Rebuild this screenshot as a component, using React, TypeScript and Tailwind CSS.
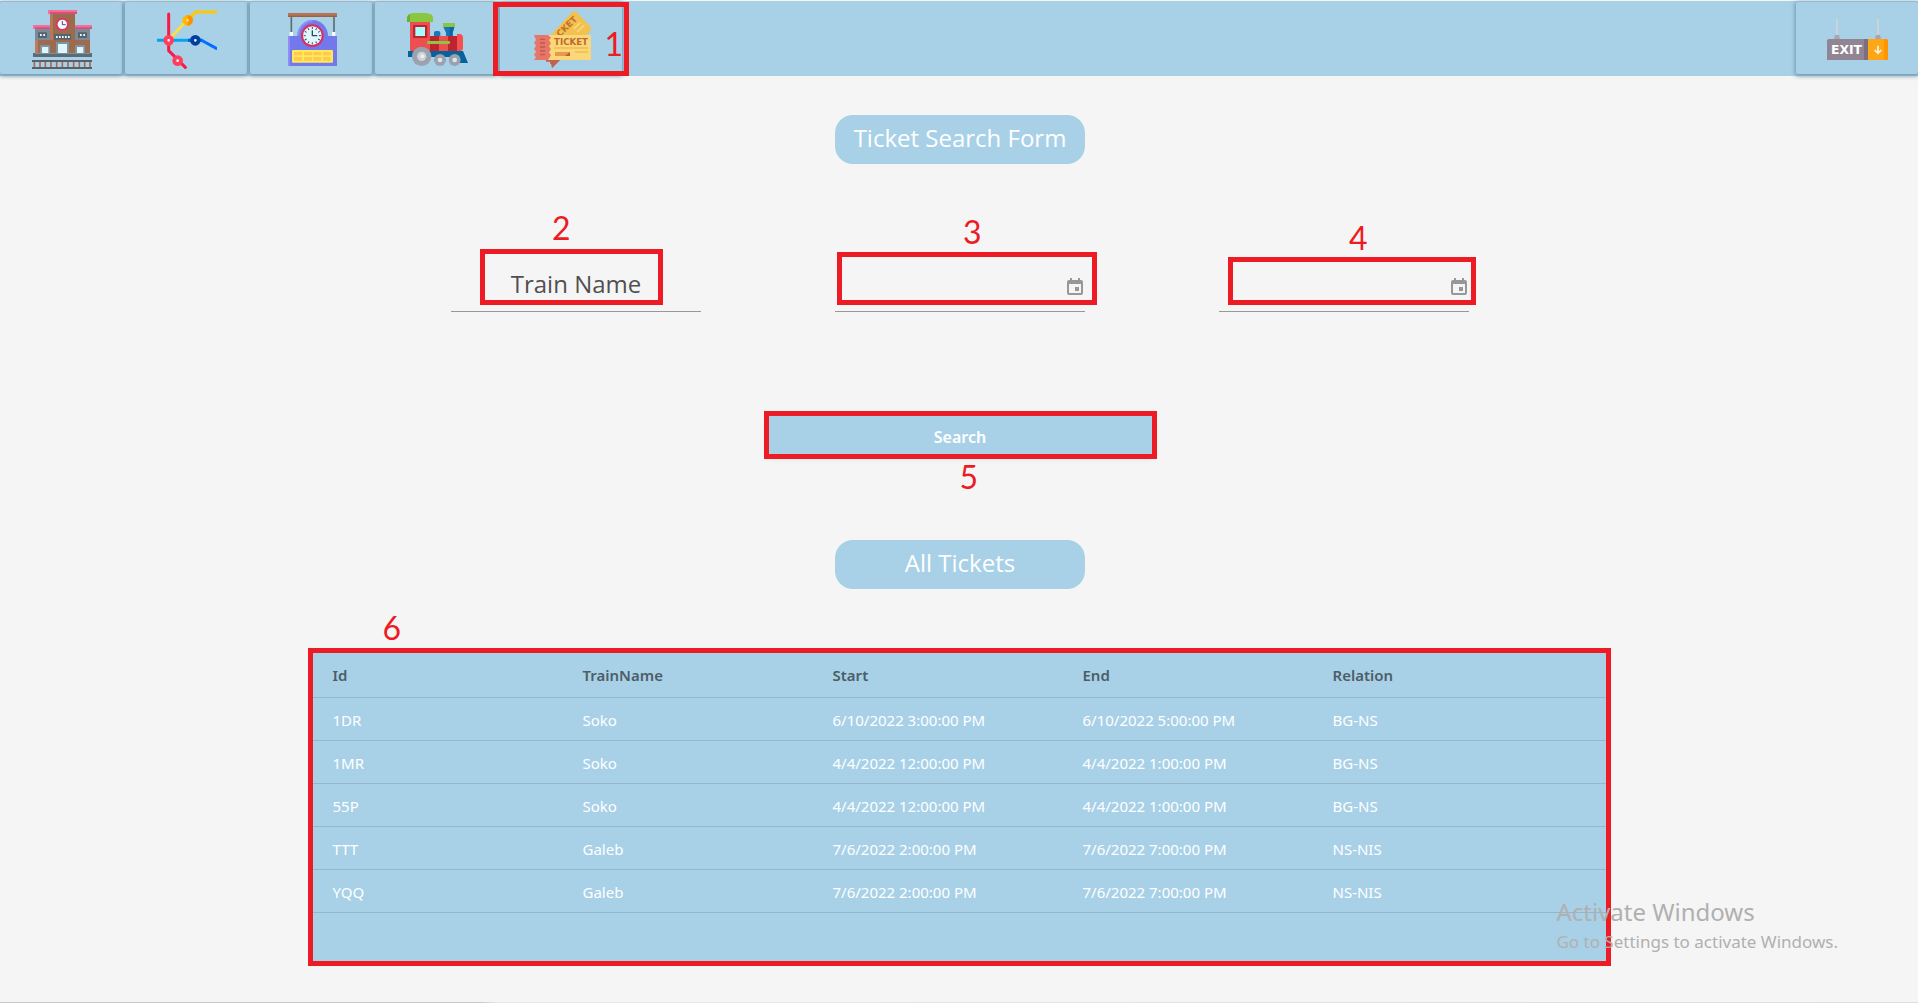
import React from "react";

function StationIcon() {
  return (
    <svg viewBox="90 18 186 186" className="size-[62px]" aria-hidden="true">
      <rect x="105" y="82" width="165" height="36" fill="#7b8a96" />
      <rect x="105" y="117" width="165" height="40" fill="#9c6b52" />
      <rect x="105" y="117" width="9" height="40" fill="#c07a5a" />
      <rect x="150" y="36" width="75" height="121" fill="#9c6b4c" />
      <rect x="150" y="36" width="9" height="82" fill="#b9775a" />
      <rect x="144" y="27" width="87" height="12" fill="#f0719b" />
      <rect x="150" y="33" width="81" height="6" fill="#d94f7c" />
      <path d="M99 72h51v12H99zM225 72h51v12h-51z" fill="#f0719b" />
      <path d="M105 79h45v5h-45zM225 79h51v5h-51z" fill="#d94f7c" />
      <circle cx="187" cy="70" r="20" fill="#d9386b" />
      <circle cx="187" cy="70" r="14" fill="#eefcff" />
      <path d="M187 60v11h10" stroke="#46545e" strokeWidth="3" fill="none" />
      <path d="M162 99h51v17h-51zM114 94h27v17h-27zM234 94h27v17h-27z" fill="#56646f" />
      <path d="M168 105h5v6h-5zM177 105h5v6h-5zM186 105h5v6h-5zM195 105h5v6h-5zM204 105h5v6h-5zM120 99h5v6h-5zM130 99h5v6h-5zM240 99h5v6h-5zM250 99h5v6h-5z" fill="#eefcff" />
      <path d="M168 123h39v34h-39zM120 132h30v25h-30zM225 132h30v25h-30z" fill="#8093a0" />
      <path d="M174 129h27v28h-27zM126 138h19v19h-19zM231 138h19v19h-19z" fill="#dcf7ff" />
      <rect x="99" y="156" width="177" height="12" fill="#5a6c78" />
      <rect x="105" y="156" width="165" height="3" fill="#7c8f9b" />
      <path d="M103 177v30M120 177v30M136 177v30M153 177v30M170 177v30M187 177v30M204 177v30M221 177v30M238 177v30M254 177v30M270 177v30" stroke="#a9694c" strokeWidth="5" />
      <path d="M96 180h183M96 201h183" stroke="#56616b" strokeWidth="6" />
    </svg>
  );
}

function RouteIcon() {
  return (
    <svg viewBox="465 18 186 186" className="size-[62px]" aria-hidden="true">
      <g fill="none" strokeWidth="9">
        <path d="M471 118h100" stroke="#00a5ef" />
        <path d="M564 118h44" stroke="#0563d8" />
        <path d="M603 117l46 25" stroke="#0070ff" strokeLinecap="round" />
        <path d="M506 117l48-52" stroke="#ffdd40" />
        <path d="M567 53l20-20h61" stroke="#ffc800" strokeLinecap="round" />
        <path d="M506 39v110l50 50" stroke="#fb1845" strokeLinecap="round" />
      </g>
      <circle cx="506" cy="118" r="10" fill="#fff" stroke="#ff3e5c" strokeWidth="12" />
      <circle cx="533" cy="179" r="10" fill="#fff" stroke="#ff3e5c" strokeWidth="12" />
      <circle cx="563" cy="58" r="10" fill="#ffe2a0" stroke="#ffb900" strokeWidth="12" />
      <path d="M563 48a10 10 0 010 20" fill="none" stroke="#ff9000" strokeWidth="12" />
      <circle cx="586" cy="118" r="10" fill="#fff" stroke="#003f9e" strokeWidth="12" />
    </svg>
  );
}

function ScheduleIcon() {
  const ticks = [0, 30, 60, 90, 120, 150, 180, 210, 240, 270, 300, 330];
  return (
    <svg viewBox="120 18 186 186" className="size-[62px]" aria-hidden="true">
      <path d="M154 46v48M282 46v48" stroke="#5c6e7b" strokeWidth="5" />
      <rect x="144" y="36" width="147" height="12" fill="#b87355" />
      <rect x="144" y="44" width="147" height="4" fill="#97614a" />
      <rect x="149" y="93" width="10" height="13" fill="#f2fbff" />
      <rect x="276" y="93" width="10" height="13" fill="#f2fbff" />
      <path d="M144 105h28a46 48 0 0192 0h27v90H144z" fill="#7379ea" />
      <path d="M144 105h6v90h-6zM172 105a46 48 0 0146-48v6a40 42 0 00-40 42z" fill="#8f8df5" />
      <circle cx="217" cy="104" r="34" fill="#dc2d5d" />
      <circle cx="217" cy="104" r="28" fill="#dff8ff" />
      {ticks.map((angle) => (
        <path key={angle} d="M217 78v6" stroke="#394954" strokeWidth="3" transform={`rotate(${angle} 217 104)`} />
      ))}
      <path d="M217 88v16h15" stroke="#394954" strokeWidth="4" fill="none" />
      <rect x="156" y="147" width="123" height="38" rx="3" fill="#ffe85a" />
      <path d="M162 153h24v10h-24zM192 153h24v10h-24zM220 153h24v10h-24zM249 153h23v10h-23zM162 168h24v11h-24zM192 168h24v11h-24zM220 168h24v11h-24zM249 168h23v11h-23z" fill="#ffc94f" />
    </svg>
  );
}

function TrainIcon() {
  return (
    <svg viewBox="495 18 186 186" className="size-[62px] overflow-visible" aria-hidden="true">
      <path d="M504 150h165l15 36h-27l-10-18H504z" fill="#04629c" />
      <rect x="510" y="60" width="60" height="90" fill="#ed4f50" />
      <path d="M570 105h84v45h-84z" fill="#bd2430" />
      <path d="M597 105h27v45h-27z" fill="#ed4f50" />
      <path d="M651 99h9q9 2 9 12v30q0 9-9 9h-9z" fill="#f4504f" />
      <path d="M501 63V49q2-13 24-13h30q23 1 24 13v14z" fill="#8ac640" />
      <path d="M501 63V49q2-8 9-10v24z" fill="#6daf35" />
      <rect x="519" y="72" width="43" height="39" rx="3" fill="#bd2430" />
      <rect x="526" y="78" width="29" height="27" fill="#a6fbff" />
      <path d="M582 105V95q0-5 6-5h7q6 0 6 5v10z" fill="#1976b8" />
      <path d="M610 78h33l-5 17v10h-20V95z" fill="#1976b8" />
      <path d="M628 78h15l-5 17v10h-10z" fill="#0b67a8" />
      <rect x="609" y="66" width="36" height="12" fill="#8ac640" />
      <rect x="561" y="120" width="69" height="9" rx="3" fill="#8ac640" />
      <circle cx="545" cy="166" r="29" fill="#9aa2ad" />
      <circle cx="545" cy="166" r="14" fill="#cdd1d8" />
      <circle cx="547" cy="166" r="6" fill="#eceef2" />
      <circle cx="600" cy="177" r="18" fill="#9aa2ad" />
      <circle cx="600" cy="177" r="7" fill="#e2e4ea" />
      <circle cx="644" cy="177" r="18" fill="#9aa2ad" />
      <circle cx="644" cy="177" r="7" fill="#e2e4ea" />
    </svg>
  );
}

function TicketIcon() {
  return (
    <svg viewBox="150 18 186 186" className="size-[62px]" aria-hidden="true">
      <path d="M198 174h42v4l-24 24-3-14h-3v-6h-12z" fill="#c4604f" />
      <path d="M213 101l66-70 8-1 46 49v8l-14 15z" fill="#f2c14e" />
      <text x="240" y="109" transform="rotate(-45 240 109)" fontFamily="DejaVu Sans, sans-serif" fontWeight="700" fontSize="26" fill="#c3702c">CKET</text>
      <path d="M281 83l20-18M291 93l22-20" stroke="#f9dc8c" strokeWidth="4" />
      <path d="M204 102h129v75H204z" fill="#fbd779" />
      <path d="M162 102h42l9 8-6 8 6 9-6 9 6 9-6 9 6 9-9 14h-42l6-8-6-8 6-9-6-9 6-9-6-9 6-8z" fill="#e67667" />
      <path d="M180 115h15M180 126h15M180 138h15M180 150h15M180 161h15" stroke="#c3574f" strokeWidth="4" />
      <text x="222" y="131" fontFamily="DejaVu Sans, sans-serif" fontWeight="700" fontSize="26" fill="#bd6a2b">TICKET</text>
      <path d="M222 141h102M285 153h39" stroke="#f0bd49" strokeWidth="5" />
      <rect x="225" y="153" width="45" height="12" fill="#e59a50" />
      <path d="M255 165l15-12v12z" fill="#b9622c" />
    </svg>
  );
}

function ExitIcon() {
  return (
    <svg viewBox="168 18 186 186" className="size-[62px]" aria-hidden="true">
      <path d="M201 54v50M324 54v50" stroke="#c8d4da" strokeWidth="6" />
      <path d="M192 114l3-12h12l3 12zM315 114l3-12h12l3 12z" fill="#aaa3b0" />
      <path d="M175 114h119v63H171v-59z" fill="#918594" />
      <rect x="282" y="114" width="12" height="63" fill="#7c6f80" />
      <path d="M294 114h56l4 4v59h-60z" fill="#ffa617" />
      <path d="M342 114h8l4 4v59h-12z" fill="#ff9500" />
      <text x="183" y="160" fontFamily="DejaVu Sans, sans-serif" fontWeight="700" fontSize="37" fill="#fff">EXIT</text>
      <path d="M324 134v22M314 147l10 10 10-10" stroke="#fff6e4" strokeWidth="5" fill="none" />
    </svg>
  );
}

function CalendarIcon() {
  return (
    <svg viewBox="0 0 16 17" className="h-[17px] w-4" aria-hidden="true">
      <path d="M3 0h2v2h6V0h2v2h1q2 0 2 2v11q0 2-2 2H2q-2 0-2-2V4q0-2 2-2h1zM2 6v9h12V6z" fill="#979797" />
      <rect x="8" y="9" width="4" height="4" fill="#979797" />
    </svg>
  );
}

function Callout({ label, box, number }: { label: string; box: string; number: string }) {
  return (
    <>
      <span className={`pointer-events-none absolute border-[5px] border-[#ed1c24] ${box}`} />
      <span className={`pointer-events-none absolute font-['Lato',sans-serif] text-[32px] leading-8 text-[#ed1c24] ${number}`}>
        {label}
      </span>
    </>
  );
}

function NavButton({ label, children }: { label: string; children: React.ReactNode }) {
  return (
    <button
      type="button"
      aria-label={label}
      className="flex h-[72px] w-[122px] items-center justify-center rounded-xs bg-[#a8d1e7] shadow-[0_1px_4px_1px_#6f95aa]"
    >
      {children}
    </button>
  );
}

function Heading({ children }: { children: React.ReactNode }) {
  return (
    <h2 className="mx-auto h-[49px] w-[250px] rounded-[18px] bg-[#a8d1e7] text-center font-['Open_Sans',sans-serif] text-2xl leading-[46px] text-white">
      {children}
    </h2>
  );
}

function DateField({ label, children }: { label: string; children: React.ReactNode }) {
  return (
    <div className="relative mx-auto flex h-[60px] w-[250px] items-end border-b border-[#989898] pb-3">
      <input type="text" aria-label={label} className="h-8 min-w-0 flex-1 bg-transparent text-xl outline-none" />
      <button type="button" aria-label={`Pick ${label.toLowerCase()}`} className="mr-0.5 mb-1">
        <CalendarIcon />
      </button>
      {children}
    </div>
  );
}

const columns = ["Id", "TrainName", "Start", "End"];
const tickets = [
  ["1DR", "Soko", "6/10/2022 3:00:00 PM", "6/10/2022 5:00:00 PM", "BG-NS"],
  ["1MR", "Soko", "4/4/2022 12:00:00 PM", "4/4/2022 1:00:00 PM", "BG-NS"],
  ["55P", "Soko", "4/4/2022 12:00:00 PM", "4/4/2022 1:00:00 PM", "BG-NS"],
  ["TTT", "Galeb", "7/6/2022 2:00:00 PM", "7/6/2022 7:00:00 PM", "NS-NIS"],
  ["YQQ", "Galeb", "7/6/2022 2:00:00 PM", "7/6/2022 7:00:00 PM", "NS-NIS"],
];

export default function App() {
  return (
    <div className="relative flex min-h-screen flex-col overflow-hidden bg-[#f5f5f5] font-['Noto_Sans','Open_Sans',sans-serif]">
      <header className="mt-px flex h-[75px] items-start justify-between bg-[#a8d1e7] pt-px">
        <nav className="flex gap-[3px]">
          <NavButton label="Stations"><StationIcon /></NavButton>
          <NavButton label="Routes"><RouteIcon /></NavButton>
          <NavButton label="Schedule"><ScheduleIcon /></NavButton>
          <NavButton label="Trains"><TrainIcon /></NavButton>
          <div className="relative">
            <NavButton label="Tickets"><TicketIcon /></NavButton>
            <Callout label="1" box="-left-[7px] -right-[7px] top-0 h-[74px]" number="-right-px top-[26px]" />
          </div>
        </nav>
        <NavButton label="Exit"><ExitIcon /></NavButton>
      </header>

      <main className="pt-[39px]">
        <div className="pl-0.5">
          <Heading>Ticket Search Form</Heading>
          <form>
            <div className="mx-auto mt-[88px] grid w-[1152px] max-w-full grid-cols-3">
              <div className="relative mx-auto flex h-[60px] w-[250px] items-end border-b border-[#989898] pb-2">
                <input
                  type="text"
                  aria-label="Train name"
                  placeholder="Train Name"
                  className="h-[37px] w-full bg-transparent pb-0.5 text-center font-['Open_Sans',sans-serif] text-2xl text-[#505050] outline-none placeholder:text-[#505050]"
                />
                <Callout label="2" box="left-[29px] -top-[3px] h-14 w-[183px]" number="left-[101px] -top-10" />
              </div>
              <DateField label="Start date">
                <Callout label="3" box="left-0.5 top-0 h-[53px] w-[260px]" number="left-32 -top-9" />
              </DateField>
              <DateField label="End date">
                <Callout label="4" box="left-[9px] top-[5px] h-12 w-[248px]" number="left-[130px] -top-[30px]" />
              </DateField>
            </div>
            <div className="relative mx-auto mt-[101px] w-[387px]">
              <button type="submit" className="h-[42px] w-full rounded-sm bg-[#a8d1e7] pt-1.5 text-base font-semibold text-white shadow-md">
                Search
              </button>
              <Callout label="5" box="-left-[3px] -right-[3px] -top-0.5 h-12" number="left-[193px] top-[48px]" />
            </div>
          </form>
          <div className="mt-[85px]">
            <Heading>All Tickets</Heading>
          </div>
        </div>

        <section aria-label="Tickets" className="relative mx-auto mt-16 h-[308px] w-[1293px] max-w-full bg-[#a8d1e7]">
          <table className="w-full table-fixed text-left text-[15px] text-white">
            <thead>
              <tr className="h-11 border-b border-[#93b6ca] text-[#4c5e68]">
                {columns.map((name) => (
                  <th key={name} scope="col" className="w-[250px] pl-5 font-semibold">{name}</th>
                ))}
                <th scope="col" className="pl-5 font-semibold">Relation</th>
              </tr>
            </thead>
            <tbody>
              {tickets.map((row) => (
                <tr key={row[0]} className="h-[43px] border-b border-[#93b6ca]">
                  {row.map((cell, index) => (
                    <td key={index} className="pt-1 pl-5">{cell}</td>
                  ))}
                </tr>
              ))}
            </tbody>
          </table>
          <Callout label="6" box="-inset-[5px]" number="left-[70px] -top-[41px]" />
        </section>
      </main>

      <aside className="pointer-events-none absolute right-20 bottom-[47px] text-[#b0b0b0]">
        <p className="text-2xl leading-8">Activate Windows</p>
        <p className="text-[17px] leading-7">Go to Settings to activate Windows.</p>
      </aside>
      <div className="absolute inset-x-0 bottom-0 h-px bg-linear-to-r from-[#c8c8c8] from-25% via-[#e8e8e8] via-26% to-[#dddddd]" />
    </div>
  );
}
